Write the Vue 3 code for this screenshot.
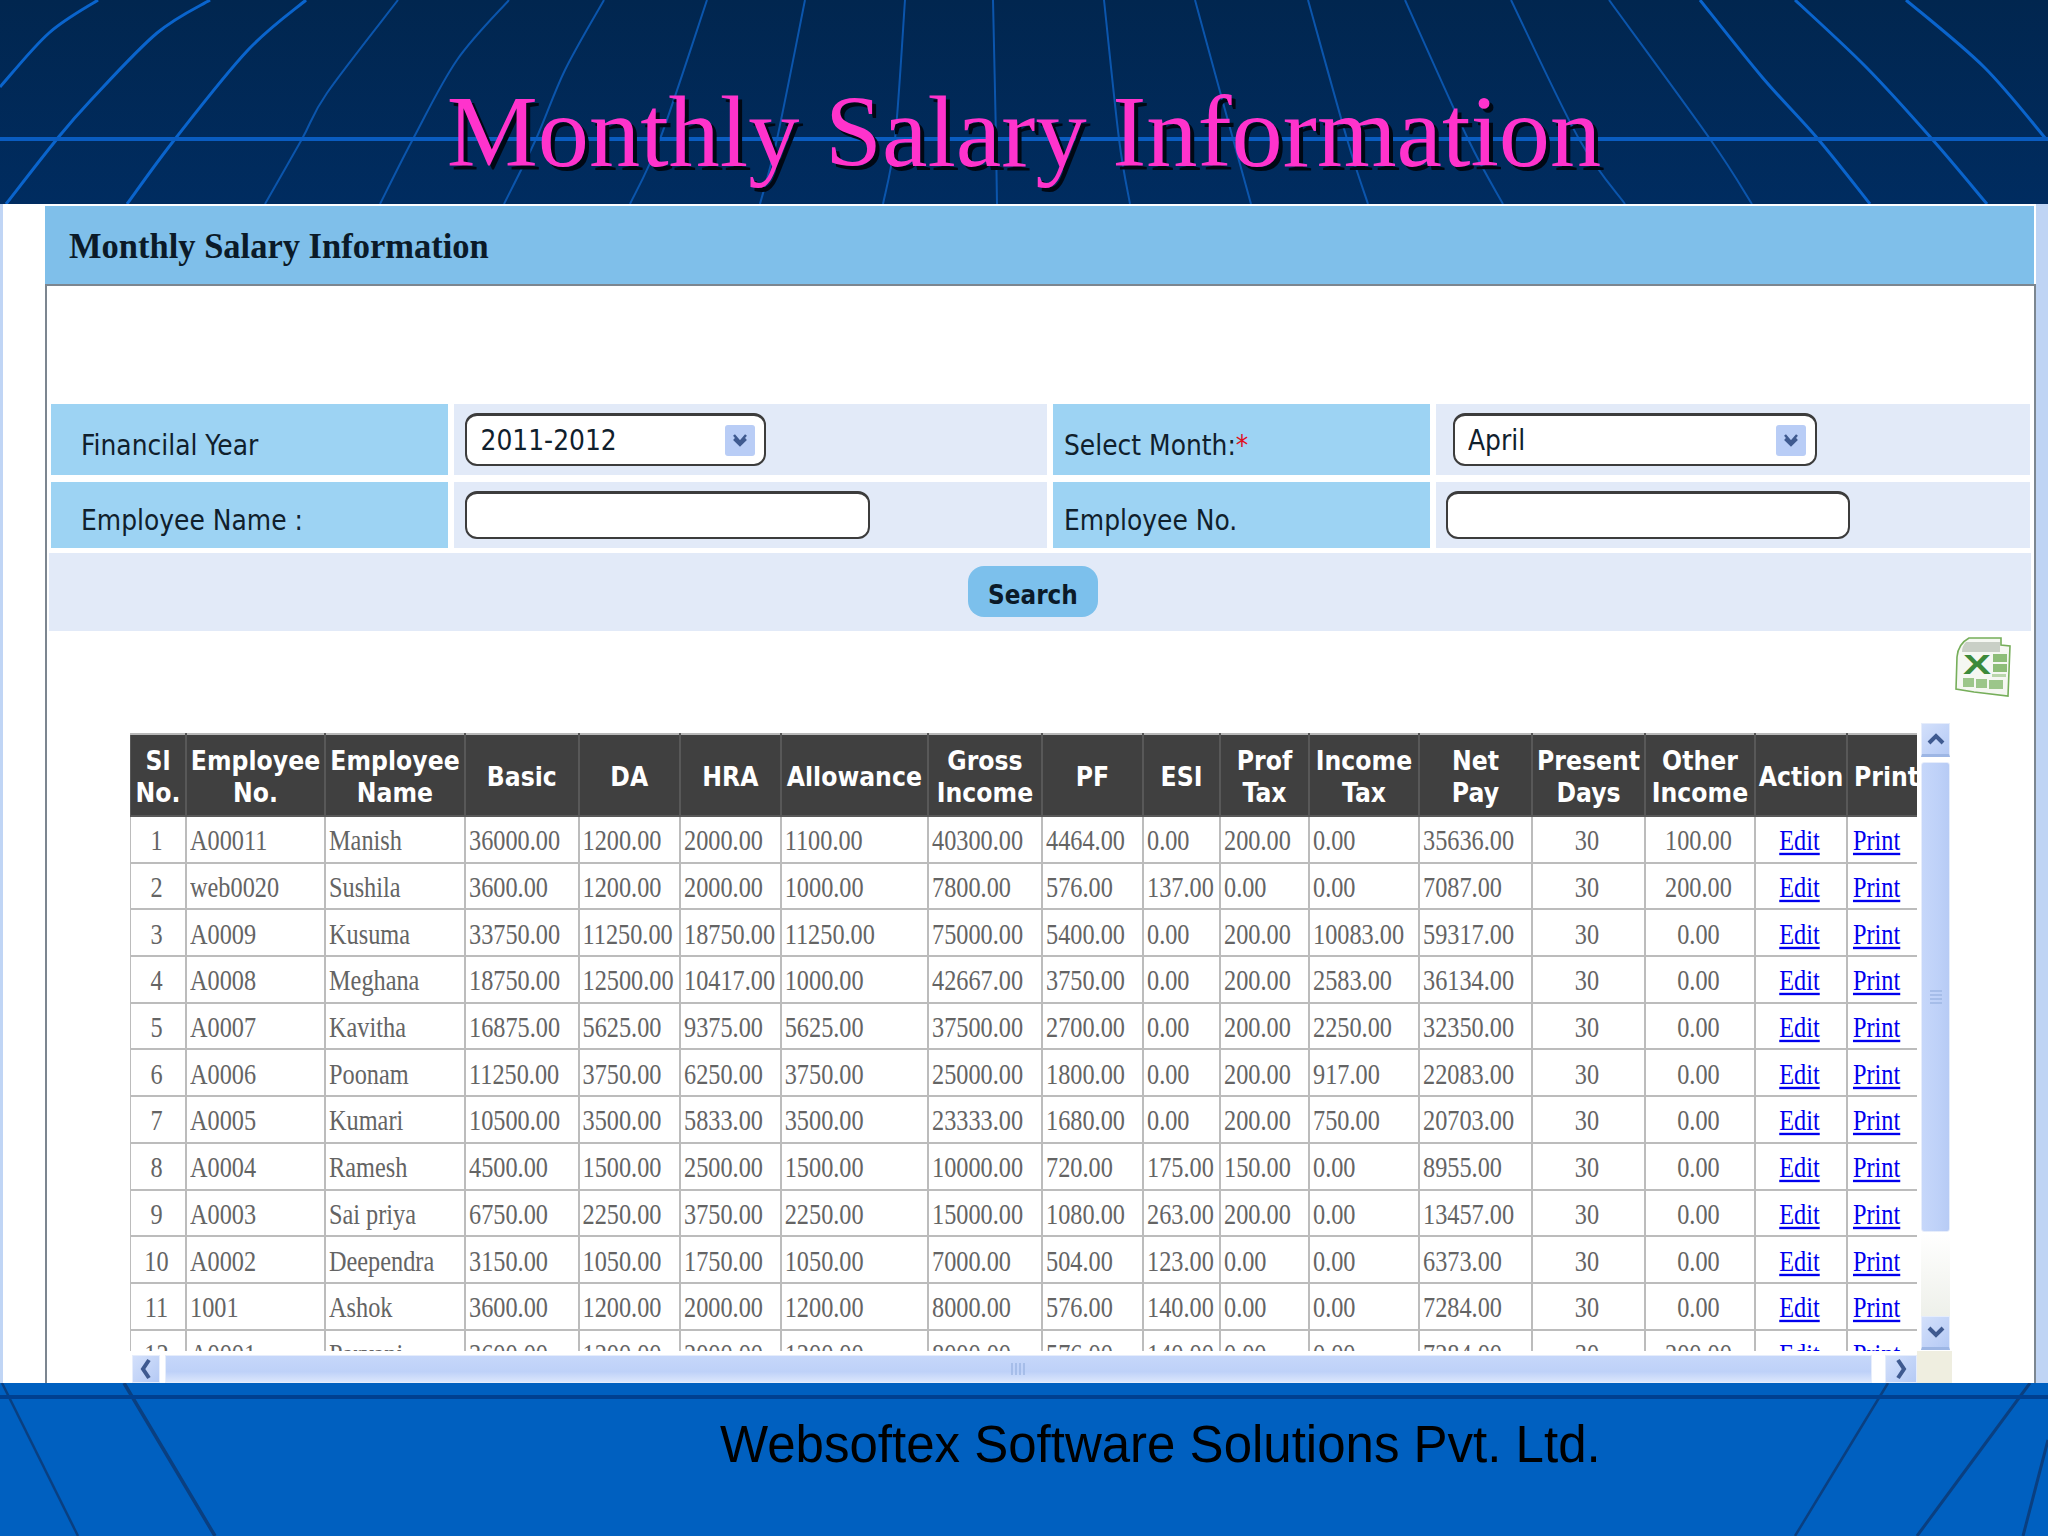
<template>
  <div class="slide">
    <header class="top">
      <svg class="art" width="2048" height="204" viewBox="0 0 2048 204">
        <path v-for="(d, i) in topLines" :key="i" :d="d.path" :stroke-width="d.w" :stroke="d.c" fill="none" />
        <rect x="0" y="137" width="2048" height="4" fill="#0a5cc0" />
      </svg>
      <h1 class="title">Monthly Salary Information</h1>
    </header>

    <main class="middle">
      <div class="strip-left"></div>
      <div class="gutter"></div>
      <section class="panel">
        <h2 class="panel-head"><span class="tall-head">Monthly Salary Information</span></h2>
        <div class="panel-body">
          <form class="form" @submit.prevent>
            <label class="lbl lbl-a"><span class="tall">Financilal Year</span></label>
            <div class="cell cell-a">
              <div class="sel sel-year">
                <span class="tall">2011-2012</span>
                <span class="sel-btn">
                  <svg width="20" height="16" viewBox="0 0 20 16"><path d="M4 3 L10 10 L16 3 M4 7 L10 13 L16 7" stroke="#3f5a90" stroke-width="2.5" fill="none" /></svg>
                </span>
              </div>
            </div>
            <label class="lbl lbl-b"><span class="tall">Select Month:<em>*</em></span></label>
            <div class="cell cell-b">
              <div class="sel sel-month">
                <span class="tall">April</span>
                <span class="sel-btn">
                  <svg width="20" height="16" viewBox="0 0 20 16"><path d="M4 3 L10 10 L16 3 M4 7 L10 13 L16 7" stroke="#3f5a90" stroke-width="2.5" fill="none" /></svg>
                </span>
              </div>
            </div>
            <label class="lbl lbl-a"><span class="tall">Employee Name :</span></label>
            <div class="cell cell-a"><input class="inp inp-name" type="text" /></div>
            <label class="lbl lbl-b"><span class="tall">Employee No.</span></label>
            <div class="cell cell-c"><input class="inp inp-no" type="text" /></div>
            <div class="search-row">
              <button class="search" type="button"><span class="tall-btn">Search</span></button>
            </div>
          </form>

          <div class="export">
            <svg width="57" height="60" viewBox="0 0 57 60" aria-label="Export to Excel">
              <path d="M2 52 L3 20 Q4 7 15 1 L47 1 L47 8 L56 9 L54 59 L20 55 Z" fill="#f5f7f2" stroke="#76ae5a" stroke-width="1.6" />
              <path d="M12 5 L46 5 L46 15 L8 15 Q8 9 12 5 Z" fill="#c9cfc6" />
              <rect x="39" y="17" width="14" height="8" fill="#8dbd78" />
              <rect x="39" y="27" width="14" height="8" fill="#8dbd78" />
              <rect x="38" y="37" width="14" height="3" fill="#b9d6ab" />
              <rect x="9" y="41" width="11" height="9" fill="#9cc68a" />
              <rect x="22" y="42" width="11" height="9" fill="#9cc68a" />
              <rect x="35" y="43" width="14" height="9" fill="#9cc68a" />
              <text x="9" y="37" class="xl-x" textLength="28" lengthAdjust="spacingAndGlyphs">X</text>
            </svg>
          </div>

          <div class="grid-area">
            <div class="table-clip">
              <table class="sal">
                <colgroup>
                  <col v-for="(w, i) in colWidths" :key="i" :style="{ width: w + 'px' }" />
                </colgroup>
                <thead>
                  <tr>
                    <th v-for="(h, i) in heads" :key="i" :class="{ 'th-print': h[0] === 'Print' }">
                      <span class="tall-th">
                        <template v-for="(line, j) in h" :key="j">{{ line }}<br v-if="j < h.length - 1" /></template>
                      </span>
                    </th>
                  </tr>
                </thead>
                <tbody>
                  <tr v-for="row in rows" :key="row[0]">
                    <td v-for="(v, i) in row" :key="i" :class="{ mid: i === 0 || i === 13 || i === 14 }">
                      <span class="tall-td">{{ v }}</span>
                    </td>
                    <td class="mid"><a class="tall-td" href="#">Edit</a></td>
                    <td class="td-print"><a class="tall-td" href="#">Print</a></td>
                  </tr>
                </tbody>
              </table>
            </div>

            <div class="vbar">
              <div class="sb-btn sb-up">
                <svg width="20" height="14" viewBox="0 0 20 14"><path d="M3 11 L10 4 L17 11" stroke="#3f5a90" stroke-width="4" fill="none" /></svg>
              </div>
              <div class="v-thumb">
                <svg width="14" height="17" viewBox="0 0 14 17"><path d="M1 2H13M1 6H13M1 10H13M1 14H13" stroke="#9db6e4" stroke-width="1.5" /></svg>
              </div>
              <div class="v-track"></div>
              <div class="sb-btn sb-down">
                <svg width="20" height="14" viewBox="0 0 20 14"><path d="M3 3 L10 10 L17 3" stroke="#3f5a90" stroke-width="4" fill="none" /></svg>
              </div>
            </div>

            <div class="hbar">
              <div class="sb-btn sb-left">
                <svg width="12" height="22" viewBox="0 0 12 22"><path d="M9 2 L3 11 L9 20" stroke="#3f5a90" stroke-width="4" fill="none" /></svg>
              </div>
              <div class="h-thumb">
                <svg width="17" height="14" viewBox="0 0 17 14"><path d="M2 1V13M6 1V13M10 1V13M14 1V13" stroke="#9db6e4" stroke-width="1.5" /></svg>
              </div>
              <div class="sb-btn sb-right">
                <svg width="12" height="22" viewBox="0 0 12 22"><path d="M3 2 L9 11 L3 20" stroke="#3f5a90" stroke-width="4" fill="none" /></svg>
              </div>
            </div>
            <div class="corner"></div>
          </div>
        </div>
      </section>
      <div class="strip-right"></div>
    </main>

    <footer class="bottom">
      <svg class="art" width="2048" height="153" viewBox="0 0 2048 153">
        <path v-for="(d, i) in bottomLines" :key="i" :d="d.path" :stroke-width="d.w" stroke="#0a3f80" fill="none" />
        <rect x="0" y="12" width="2048" height="4" fill="#004090" />
      </svg>
      <p class="company">Websoftex Software Solutions Pvt. Ltd.</p>
    </footer>
  </div>
</template>

<script setup>
// smooth line through the points (catmull-rom to bezier)
function line(pts, w, c) {
  let d = `M${pts[0][0]},${pts[0][1]}`;
  for (let i = 0; i < pts.length - 1; i++) {
    const p0 = pts[i - 1] || pts[i];
    const p1 = pts[i];
    const p2 = pts[i + 1];
    const p3 = pts[i + 2] || p2;
    const c1x = p1[0] + (p2[0] - p0[0]) / 6;
    const c1y = p1[1] + (p2[1] - p0[1]) / 6;
    const c2x = p2[0] - (p3[0] - p1[0]) / 6;
    const c2y = p2[1] - (p3[1] - p1[1]) / 6;
    d += ` C${c1x},${c1y} ${c2x},${c2y} ${p2[0]},${p2[1]}`;
  }
  return { path: d, w, c };
}

const bright = "#0a64cc";
const dim = "#0b55ac";

const topLines = [
  line([[98, 0], [49, 33], [0, 87]], 3, bright),
  line([[210, 0], [157, 33], [91, 100], [57, 139], [6, 204]], 3, bright),
  line([[306, 0], [248, 50], [175, 139], [127, 204]], 3, bright),
  line([[398, 0], [327, 93], [302, 139], [265, 204]], 2, dim),
  line([[509, 0], [457, 60], [413, 139], [380, 204]], 2, dim),
  line([[604, 0], [565, 70], [536, 139], [504, 204]], 2, dim),
  line([[707, 0], [660, 139], [630, 204]], 2, dim),
  line([[805, 0], [777, 139], [760, 204]], 2, dim),
  line([[905, 0], [895, 139], [883, 204]], 2, dim),
  line([[993, 0], [996, 139], [997, 204]], 2, dim),
  line([[1104, 0], [1119, 139], [1130, 204]], 2, dim),
  line([[1195, 0], [1233, 139], [1251, 204]], 2, dim),
  line([[1308, 0], [1347, 139], [1368, 204]], 2, dim),
  line([[1405, 0], [1468, 139], [1503, 204]], 2, dim),
  line([[1511, 0], [1579, 139], [1625, 204]], 2, dim),
  line([[1609, 0], [1710, 139], [1752, 204]], 2, dim),
  line([[1700, 0], [1762, 77], [1818, 139], [1870, 204]], 3, bright),
  line([[1795, 0], [1866, 67], [1932, 139], [1987, 204]], 3, bright),
  line([[1906, 0], [1984, 67], [2046, 139]], 3, bright),
];

const bottomLines = [
  line([[2, 0], [78, 153]], 2.5),
  line([[124, 0], [215, 153]], 3.5),
  line([[1888, 0], [1795, 153]], 2.5),
  line([[2030, 0], [1917, 153]], 3),
  line([[2048, 57], [2023, 153]], 3),
];

const colWidths = [56, 139, 140, 113.5, 101.5, 100.7, 147.3, 114, 101, 77, 89, 110, 113, 113, 110, 92, 72];

const heads = [
  ["Sl", "No."],
  ["Employee", "No."],
  ["Employee", "Name"],
  ["Basic"],
  ["DA"],
  ["HRA"],
  ["Allowance"],
  ["Gross", "Income"],
  ["PF"],
  ["ESI"],
  ["Prof", "Tax"],
  ["Income", "Tax"],
  ["Net", "Pay"],
  ["Present", "Days"],
  ["Other", "Income"],
  ["Action"],
  ["Print"],
];

const rows = [
  ["1", "A00011", "Manish", "36000.00", "1200.00", "2000.00", "1100.00", "40300.00", "4464.00", "0.00", "200.00", "0.00", "35636.00", "30", "100.00"],
  ["2", "web0020", "Sushila", "3600.00", "1200.00", "2000.00", "1000.00", "7800.00", "576.00", "137.00", "0.00", "0.00", "7087.00", "30", "200.00"],
  ["3", "A0009", "Kusuma", "33750.00", "11250.00", "18750.00", "11250.00", "75000.00", "5400.00", "0.00", "200.00", "10083.00", "59317.00", "30", "0.00"],
  ["4", "A0008", "Meghana", "18750.00", "12500.00", "10417.00", "1000.00", "42667.00", "3750.00", "0.00", "200.00", "2583.00", "36134.00", "30", "0.00"],
  ["5", "A0007", "Kavitha", "16875.00", "5625.00", "9375.00", "5625.00", "37500.00", "2700.00", "0.00", "200.00", "2250.00", "32350.00", "30", "0.00"],
  ["6", "A0006", "Poonam", "11250.00", "3750.00", "6250.00", "3750.00", "25000.00", "1800.00", "0.00", "200.00", "917.00", "22083.00", "30", "0.00"],
  ["7", "A0005", "Kumari", "10500.00", "3500.00", "5833.00", "3500.00", "23333.00", "1680.00", "0.00", "200.00", "750.00", "20703.00", "30", "0.00"],
  ["8", "A0004", "Ramesh", "4500.00", "1500.00", "2500.00", "1500.00", "10000.00", "720.00", "175.00", "150.00", "0.00", "8955.00", "30", "0.00"],
  ["9", "A0003", "Sai priya", "6750.00", "2250.00", "3750.00", "2250.00", "15000.00", "1080.00", "263.00", "200.00", "0.00", "13457.00", "30", "0.00"],
  ["10", "A0002", "Deependra", "3150.00", "1050.00", "1750.00", "1050.00", "7000.00", "504.00", "123.00", "0.00", "0.00", "6373.00", "30", "0.00"],
  ["11", "1001", "Ashok", "3600.00", "1200.00", "2000.00", "1200.00", "8000.00", "576.00", "140.00", "0.00", "0.00", "7284.00", "30", "0.00"],
  ["12", "A0001", "Parvani", "3600.00", "1200.00", "2000.00", "1200.00", "8000.00", "576.00", "140.00", "0.00", "0.00", "7284.00", "30", "200.00"],
];
</script>

<style scoped>
.slide {
  width: 2048px;
  height: 1536px;
  display: flex;
  flex-direction: column;
  overflow: hidden;
  font-family: "Liberation Serif", serif;
}

.art {
  position: absolute;
  left: 0;
  top: 0;
}

/* top band */
.top {
  position: relative;
  height: 204px;
  flex: none;
  background: linear-gradient(180deg, #01264f 0%, #002c60 100%);
  box-sizing: border-box;
  padding-top: 83px;
}
.title {
  position: relative;
  margin: 0;
  text-align: center;
  font-size: 102.4px;
  line-height: 98px;
  font-weight: 400;
  color: #ff33cc;
  text-shadow: 4px 4px 0 #000814;
}

/* middle */
.middle {
  flex: 1;
  min-height: 0;
  display: flex;
  background: #fff;
}
.strip-left {
  width: 3px;
  background: #c0d5f5;
}
.gutter {
  width: 43px;
}
.strip-right {
  width: 12px;
  background: #bfd4f4;
}
.panel {
  flex: 1;
  min-width: 0;
  display: flex;
  flex-direction: column;
}
.panel-head {
  margin: 2px 2px 0 -1px;
  height: 78px;
  box-sizing: border-box;
  padding: 17px 0 0 24px;
  background: #7fbfea;
  font-size: 34.5px;
  line-height: 44px;
  font-weight: 700;
  color: #0b1a28;
}
.tall-head {
  display: inline-block;
  transform: scaleY(1.06);
}
.panel-body {
  flex: 1;
  min-height: 0;
  overflow: hidden;
  border: 2px solid #7c8690;
  border-bottom: none;
  margin-left: -1px;
}

/* filter form */
.form {
  display: grid;
  grid-template-columns: 397px 593px 377px 594px;
  grid-template-rows: 71px 66px 76px;
  column-gap: 6px;
  row-gap: 7px;
  margin: 118px 0 0 4px;
  width: 1981px;
  font-family: "DejaVu Sans", sans-serif;
  font-size: 25px;
  color: #10202c;
}
.lbl {
  display: flex;
  align-items: center;
  padding-top: 11px;
  box-sizing: border-box;
  background: #9dd3f3;
}
.lbl-a {
  padding-left: 30px;
}
.lbl-b {
  padding-left: 11px;
}
.lbl em {
  font-style: normal;
  color: #e01020;
}
.tall {
  display: inline-block;
  transform: scaleY(1.1);
}
.cell {
  background: #e2eaf8;
  padding: 9px 0 0 10.5px;
  box-sizing: border-box;
}
.cell-b {
  padding-left: 17px;
}
.cell-c {
  padding-left: 10px;
}
.sel {
  height: 53px;
  box-sizing: border-box;
  display: flex;
  align-items: center;
  justify-content: space-between;
  padding: 0 9px 0 14px;
  background: #fff;
  border: 2px solid #3c3c3c;
  border-top-width: 3px;
  border-radius: 12px;
}
.sel-year {
  width: 301px;
}
.sel-month {
  width: 364px;
  padding-left: 13px;
}
.sel-btn {
  width: 30px;
  height: 31px;
  display: flex;
  align-items: center;
  justify-content: center;
  background: #b9cdf6;
  border-radius: 3px;
}
.inp {
  display: block;
  height: 48px;
  box-sizing: border-box;
  background: #fff;
  border: 2px solid #3c3c3c;
  border-top-width: 3px;
  border-radius: 12px;
  outline: none;
}
.inp-name {
  width: 405px;
}
.inp-no {
  width: 404px;
}
.search-row {
  grid-column: 1 / -1;
  margin: -2px 0 0 -2px;
  width: 1982px;
  background: #e2eaf8;
  display: flex;
  justify-content: center;
  align-items: flex-start;
  padding: 13px 14px 0 0;
  box-sizing: border-box;
}
.search {
  width: 130px;
  height: 51px;
  padding: 5px 0 0;
  border: none;
  border-radius: 16px;
  background: #7cc0ec;
  color: #0b1a28;
  font-family: "DejaVu Sans", sans-serif;
  font-size: 23.2px;
  font-weight: 700;
}
.tall-btn {
  display: inline-block;
  transform: scaleY(1.12);
}

/* excel icon */
.export {
  height: 92px;
  box-sizing: border-box;
  padding: 6px 23px 0 0;
  display: flex;
  justify-content: flex-end;
}
.xl-x {
  font-family: "Liberation Sans", sans-serif;
  font-size: 28px;
  font-weight: 700;
  fill: #3c8a3a;
}

/* table + scrollbars */
.grid-area {
  margin-left: 83px;
  width: 1822px;
  display: grid;
  grid-template-columns: 1787px 35px;
  grid-template-rows: 628px 32px;
}
.table-clip {
  padding-top: 10px;
  box-sizing: border-box;
  overflow: hidden;
}
.sal {
  width: 1789px;
  margin-left: -1px;
  table-layout: fixed;
  border-collapse: collapse;
  font-size: 24.3px;
  color: #646464;
}
.sal th {
  height: 82px;
  box-sizing: border-box;
  padding: 4px 0 0;
  background: #404040;
  border: 2px solid #585858;
  border-top-color: #b8b8b8;
  font-family: "DejaVu Sans", sans-serif;
  font-size: 23.6px;
  font-weight: 700;
  line-height: 28px;
  color: #fff;
  white-space: nowrap;
  text-align: center;
}
.sal th.th-print {
  text-align: left;
  padding-left: 6px;
}
.sal td {
  height: 46.7px;
  box-sizing: border-box;
  padding: 4px 0 0 3px;
  background: #fff;
  border: 2px solid #bcbcbc;
  white-space: nowrap;
  text-align: left;
}
.sal td.mid {
  padding: 4px 3px 0 0;
  text-align: center;
}
.sal td.td-print {
  padding-left: 5px;
}
.sal a {
  color: #0000ee;
}
.tall-th {
  display: inline-block;
  transform: scaleY(1.13);
}
.tall-td {
  display: inline-block;
  transform: scaleY(1.18);
}

.vbar {
  display: flex;
  flex-direction: column;
  padding: 0 2px 1px 4px;
  box-sizing: border-box;
}
.sb-btn {
  display: flex;
  align-items: center;
  justify-content: center;
  flex: none;
  background: linear-gradient(135deg, #d3e0fb, #b5caf5);
  border: 1px solid #e6edfb;
  box-sizing: border-box;
}
.sb-up,
.sb-down {
  height: 34px;
}
.sb-up {
  border-bottom: 3px solid #9db6e4;
}
.sb-down {
  border-bottom: 3px solid #9db6e4;
}
.v-thumb {
  margin-top: 5px;
  height: 470px;
  flex: none;
  display: flex;
  align-items: center;
  justify-content: center;
  box-sizing: border-box;
  background: linear-gradient(90deg, #c6d7fa, #bed1f8 60%, #b7cbf5);
  border: 1px solid #e6edfb;
  border-radius: 3px;
}
.v-track {
  flex: 1;
  background: linear-gradient(180deg, #fff, #eef0ea);
}
.hbar {
  display: flex;
  align-items: stretch;
  padding: 4px 0 0 2px;
  box-sizing: border-box;
}
.sb-left {
  width: 28px;
}
.sb-right {
  width: 32px;
  margin-left: 13px;
}
.h-thumb {
  margin-left: 5px;
  width: 1707px;
  display: flex;
  align-items: center;
  justify-content: center;
  box-sizing: border-box;
  background: linear-gradient(180deg, #c6d7fa, #bed1f8 60%, #dbe6fc);
  border: 1px solid #e6edfb;
}
.corner {
  background: #efeee0;
}

/* bottom band */
.bottom {
  position: relative;
  height: 153px;
  flex: none;
  background: #0060c0;
  box-sizing: border-box;
  padding: 32px 0 0 720px;
}
.company {
  position: relative;
  margin: 0;
  font-family: "Liberation Sans", sans-serif;
  font-size: 51px;
  line-height: 60px;
  color: #000;
  white-space: nowrap;
}
</style>

<style>
body {
  background: #fff;
}
</style>
